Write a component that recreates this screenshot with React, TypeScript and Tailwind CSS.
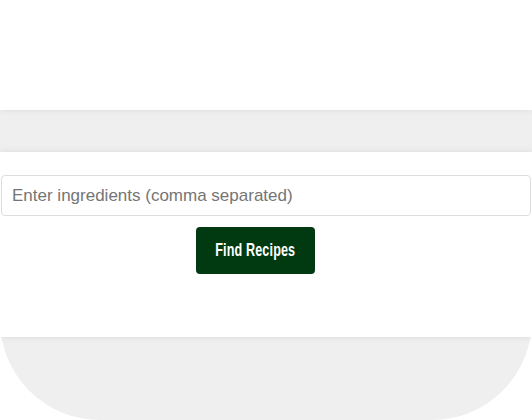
import React from "react";

export default function App() {
  return (
    <div className="w-full h-[420px] bg-white overflow-hidden" style={{ fontFamily: '"Liberation Sans", Arial, sans-serif' }}>
      <div className="h-[420px] bg-[#efefef] rounded-b-[100px] flex flex-col">
        <header className="relative z-10 h-[110px] shrink-0 bg-white shadow-[0_0_7px_rgba(0,0,0,0.09)]" />
        <main className="relative z-10 mt-[42px] h-[185px] shrink-0 bg-white shadow-[0_0_7px_rgba(0,0,0,0.09)] flex flex-col items-center pt-[23px]">
          <input
            type="text"
            placeholder="Enter ingredients (comma separated)"
            className="w-[530px] h-[41px] border border-[#dddddd] rounded-[4px] px-[10px] text-[17px] text-[#333] placeholder:text-[#757575] outline-none bg-white"
            style={{ fontFamily: '"Liberation Sans", Arial, sans-serif' }}
          />
          <button
            className="mt-[11px] mr-[21px] w-[119px] h-[47px] rounded-[4px] bg-[#013a10] text-white flex items-center justify-center"
            style={{ fontFamily: '"Liberation Sans", Arial, sans-serif' }}
          >
            <span className="inline-block whitespace-nowrap text-[18px] font-bold scale-x-[0.7] tracking-[0.2px]">Find Recipes</span>
          </button>
        </main>
      </div>
    </div>
  );
}
